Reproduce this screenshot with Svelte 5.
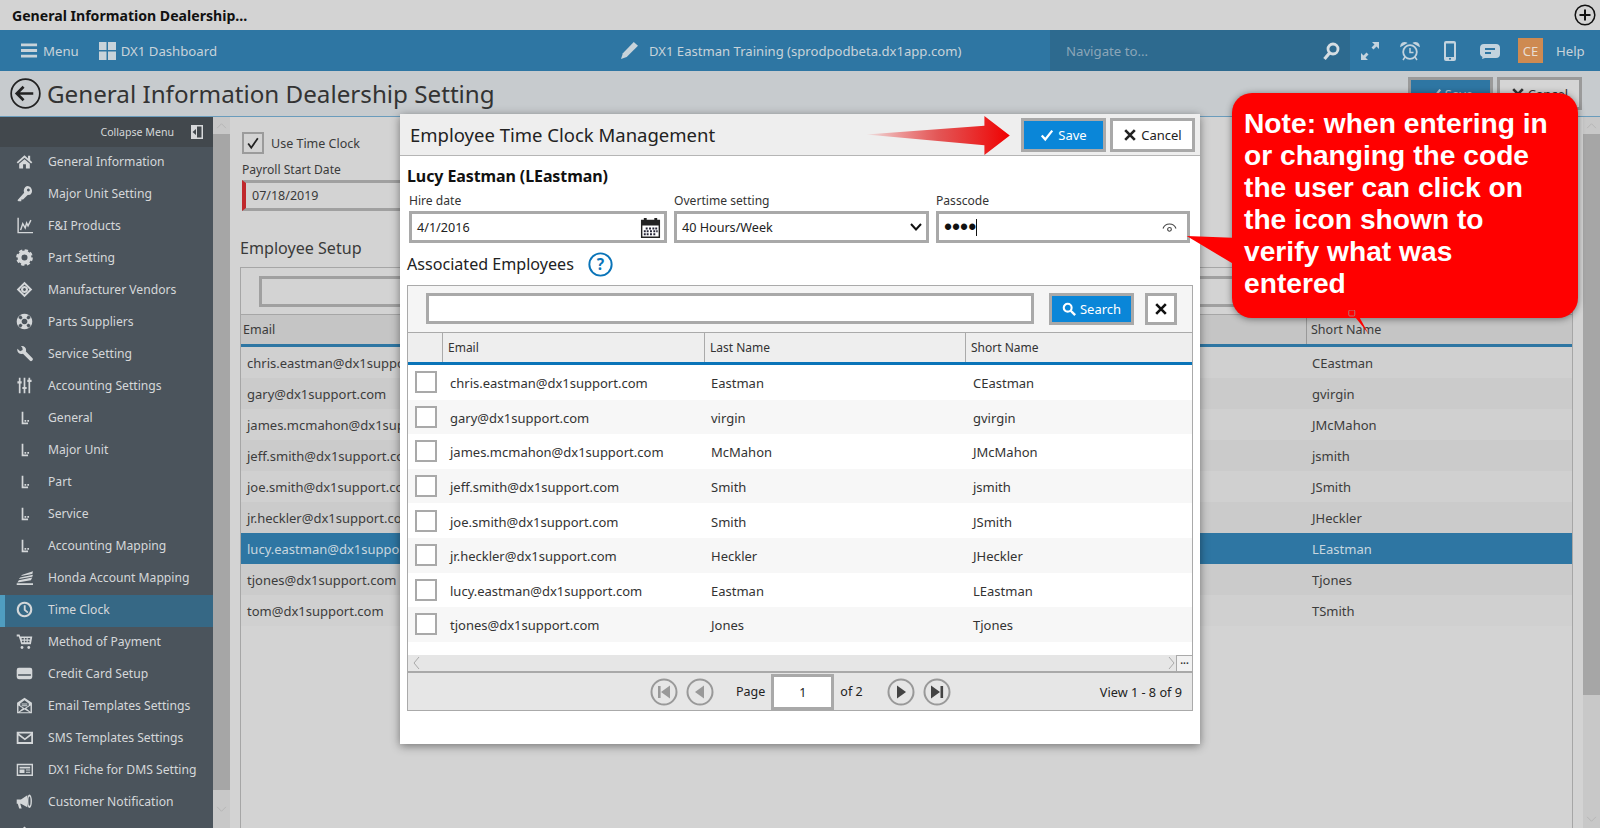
<script>
  const icons = {
    home: '<path d="M12 3 1 13l1.6 1.8L12 6.6l9.4 8.2L23 13l-3-2.6V4h-3v3.8Z"/><path d="M4.5 15.2 12 8.8l7.5 6.4V22H14v-6h-4v6H4.5Z"/>',
    key: '<path fill-rule="evenodd" d="M15.5 1.5a7 7 0 0 1 4.5 12.4L16.5 14 10 20.5H7.5V23H3.5L2 21.5l9.5-10.7a7 7 0 0 1 4-9.3Zm2 3.5a2 2 0 1 0 .01 0Z"/>',
    chart: '<path d="M2 1h2v20h20v2H2Z"/><path d="m6.5 18.5 3-9 3.5 6 2-7 2 4 4-8" fill="none" stroke="currentColor" stroke-width="2"/>',
    gear: '<circle cx="12" cy="12" r="7" fill="none" stroke="currentColor" stroke-width="5.5"/><circle cx="12" cy="12" r="10" fill="none" stroke="currentColor" stroke-width="3.6" stroke-dasharray="4.6 3.25"/>',
    vendor: '<path fill-rule="evenodd" d="M12 1 23 12 12 23 1 12Zm0 4-7 7 7 7 7-7Z"/><path fill-rule="evenodd" d="M12 7a5 5 0 1 1-.01 0Zm0 3a2 2 0 1 0 .01 0Z"/>',
    globe: '<path fill-rule="evenodd" d="M12 1a11 11 0 1 1-.01 0Zm0 7a4 4 0 1 0 .01 0ZM7.5 3.8a3 3 0 0 0-3.7 3.7l3.2 1.8a6 6 0 0 1 2.3-2.3Zm9 0-1.8 3.2A6 6 0 0 1 17 9.3l3.2-1.8a3 3 0 0 0-3.7-3.7ZM7 14.7l-3.2 1.8a3 3 0 0 0 3.7 3.7L9.3 17A6 6 0 0 1 7 14.7Zm10 0A6 6 0 0 1 14.7 17l1.8 3.2a3 3 0 0 0 3.7-3.7Z"/>',
    wrench: '<path d="M7 1.5a6 6 0 0 1 7 7.5l9 9.5a2.4 2.4 0 0 1-3.6 3.4l-9.6-9.5A6 6 0 0 1 2 5.2l3.8 3.6L9.4 7 9 4Z"/>',
    sliders: '<path d="M4 1h2.4v5H8v3H6.4v14H4V9H2V6h2Zm6.8 0h2.4v13H15v3h-1.8v6h-2.4v-6H9v-3h1.8Zm6.8 0H20v3h2v3h-2v16h-2.4V7H16V4h1.6Z"/>',
    sub: '<path d="M8 4h2.4v15H8Zm0 15h9v2.4H8ZM12 15.5h2.4v2.4H12Zm4 0h2.4v2.4H16Z"/>',
    honda: '<path d="M24 3 9 8 7 10l16-3ZM24 8 6 12l-2 2 19-3ZM23 12 4 16l-2 3 19-3ZM1 20h23v2.5H1Z"/>',
    clock: '<path fill-rule="evenodd" d="M12 1a11 11 0 1 1-.01 0Zm0 3a8 8 0 1 0 .01 0Z"/><path d="M11 6h2.6v6l4 3.4-1.6 1.8-5-4.2Z"/>',
    cart: '<path fill-rule="evenodd" d="M1 2h4l1 3h17l-2 11H7.5L4 5H1Zm7 5v2h3V7Zm4.5 0v2H15V7Zm4 0v2H20V7ZM8.5 11v2H11v-2Zm4 0v2H15v-2Zm4 0v2H19v-2Z"/><circle cx="8.5" cy="20.5" r="2"/><circle cx="18" cy="20.5" r="2"/>',
    card: '<path fill-rule="evenodd" d="M4 4h16a3 3 0 0 1 3 3v10a3 3 0 0 1-3 3H4a3 3 0 0 1-3-3V7a3 3 0 0 1 3-3Zm-1 9v2h18v-2Z"/>',
    mailopen: '<path fill-rule="evenodd" d="M12 1 22.500 8v15H1.500V8Zm0 3.500L6 9v3l6 4 6-4V9ZM3.500 12v9l6-5Zm17 0-6 4 6 5ZM12 17.500 5 21.500h14Z"/><path d="M8 9h8v1.500H8Zm0 2.500h8V13H8Z"/>',
    mail: '<path fill-rule="evenodd" d="M1 4h23v17H1Zm3 2.500 8.500 6.500L21 6.500Zm-.500 2.500v9.500h18V9l-9 7Z"/>',
    news: '<path fill-rule="evenodd" d="M1 4h23v17H1Zm2 2v13h19V6Z"/><path d="M5 8h15v2.500H5ZM5 12h7v5H5Zm9 0h6v1.500h-6Zm0 3h6v1.500h-6Z"/>',
    horn: '<path d="M1 9h6l9-6v17l-9-5H6l2 7H4.500L2.500 15H1Z"/><path fill-rule="evenodd" d="M19 2a3.500 9.500 0 0 1 0 19 3.500 9.500 0 0 1 0-19Zm0 3a1.500 6.500 0 0 0 0 13 1.500 6.500 0 0 0 0-13Z"/>',
    up: '<path d="M12 2 5 9l1.500 1.500L12 5l5.500 5.500L19 9Z"/><path d="M10 9h4v13h-4Z"/>'
  };

  const menu = [
    ['General Information', 'home'], ['Major Unit Setting', 'key'], ['F&I Products', 'chart'],
    ['Part Setting', 'gear'], ['Manufacturer Vendors', 'vendor'], ['Parts Suppliers', 'globe'],
    ['Service Setting', 'wrench'], ['Accounting Settings', 'sliders'], ['General', 'sub'],
    ['Major Unit', 'sub'], ['Part', 'sub'], ['Service', 'sub'], ['Accounting Mapping', 'sub'],
    ['Honda Account Mapping', 'honda'], ['Time Clock', 'clock'], ['Method of Payment', 'cart'],
    ['Credit Card Setup', 'card'], ['Email Templates Settings', 'mailopen'], ['SMS Templates Settings', 'mail'],
    ['DX1 Fiche for DMS Setting', 'news'], ['Customer Notification', 'horn'], ['', 'up']
  ];

  const bgRows = [
    ['chris.eastman@dx1support.com', 'CEastman'], ['gary@dx1support.com', 'gvirgin'],
    ['james.mcmahon@dx1support.com', 'JMcMahon'], ['jeff.smith@dx1support.com', 'jsmith'],
    ['joe.smith@dx1support.com', 'JSmith'], ['jr.heckler@dx1support.com', 'JHeckler'],
    ['lucy.eastman@dx1support.com', 'LEastman'], ['tjones@dx1support.com', 'Tjones'],
    ['tom@dx1support.com', 'TSmith']
  ];

  const modalRows = [
    ['chris.eastman@dx1support.com', 'Eastman', 'CEastman'], ['gary@dx1support.com', 'virgin', 'gvirgin'],
    ['james.mcmahon@dx1support.com', 'McMahon', 'JMcMahon'], ['jeff.smith@dx1support.com', 'Smith', 'jsmith'],
    ['joe.smith@dx1support.com', 'Smith', 'JSmith'], ['jr.heckler@dx1support.com', 'Heckler', 'JHeckler'],
    ['lucy.eastman@dx1support.com', 'Eastman', 'LEastman'], ['tjones@dx1support.com', 'Jones', 'Tjones']
  ];
</script>

{#snippet check()}
  <svg class="btn-ic" viewBox="0 0 16 16"><path d="M2 8.500 6 13l8-10" fill="none" stroke="currentColor" stroke-width="2.600"/></svg>
{/snippet}
{#snippet cross(c)}
  <svg class={c} viewBox="0 0 16 16"><path d="M2.500 2.500 13.500 13.500M13.500 2.500 2.500 13.500" fill="none" stroke="currentColor" stroke-width="3"/></svg>
{/snippet}
{#snippet pagerBtn(kind)}
  <svg class="pg" viewBox="0 0 28 28">
    <circle cx="14" cy="14" r="12.500" fill="none" stroke="#999" stroke-width="2"/>
    {#if kind === 'first'}<path d="M8 8h2.600v12H8ZM20 7.500v13l-9-6.500Z" fill="#999"/>{/if}
    {#if kind === 'prev'}<path d="M18 7.500v13l-9-6.500Z" fill="#999"/>{/if}
    {#if kind === 'next'}<path d="M10 7.500v13l9-6.500Z" fill="#444"/>{/if}
    {#if kind === 'last'}<path d="M8 7.500v13l9-6.500ZM17.500 8h2.600v12h-2.600Z" fill="#444"/>{/if}
  </svg>
{/snippet}

<div class="page">
  <header class="topbar">
    <span class="app-title">General Information Dealership...</span>
    <svg class="plus" viewBox="0 0 22 22"><circle cx="11" cy="11" r="9.800" fill="none" stroke="#111" stroke-width="1.500"/><path d="M11 5.500v11M5.500 11h11" stroke="#111" stroke-width="2"/></svg>
  </header>

  <nav class="navbar">
    <div class="nav-left">
      <span class="nav-item">
        <svg class="burger" viewBox="0 0 18 15"><path d="M0 0h17v3H0Zm0 6h17v3H0Zm0 6h17v3H0Z" fill="currentColor"/></svg>Menu
      </span>
      <span class="nav-item">
        <svg class="tiles" viewBox="0 0 17 18"><path d="M0 0h7.500v8H0Zm9 0h8v8H9ZM0 9.500h7.500V18H0Zm9 0h8V18H9Z" fill="currentColor"/></svg>DX1 Dashboard
      </span>
    </div>
    <div class="nav-center">
      <svg class="pencil" viewBox="0 0 18 18"><path d="M13.500 0 18 4 6 16l-6 2 2-6Z" fill="currentColor"/></svg>
      DX1 Eastman Training (sprodpodbeta.dx1app.com)
    </div>
    <div class="nav-search">
      <span>Navigate to...</span>
      <svg class="search-ic" viewBox="0 0 18 18"><circle cx="11" cy="7" r="5" fill="none" stroke="currentColor" stroke-width="2.800"/><path d="m7.500 11-5 6" stroke="currentColor" stroke-width="3.200"/></svg>
    </div>
    <div class="nav-icons">
      <svg class="n-ic" viewBox="0 0 20 20"><path d="M12 1h7v7l-2.500-2.500-3 3-2-2 3-3ZM1 12v7h7l-2.500-2.500 3-3-2-2-3 3Z" fill="currentColor"/></svg>
      <svg class="n-ic" viewBox="0 0 20 20"><circle cx="10" cy="11" r="6.800" fill="none" stroke="currentColor" stroke-width="1.800"/><path d="M10 7v4.500h3.500" fill="none" stroke="currentColor" stroke-width="1.500"/><path d="M1 5a3.500 3.500 0 0 1 5-3ZM19 5a3.500 3.500 0 0 0-5-3ZM5 16l-2 3M15 16l2 3" fill="currentColor" stroke="currentColor" stroke-width="1.500"/></svg>
      <svg class="n-ic" viewBox="0 0 20 20"><path fill-rule="evenodd" d="M6 0h8a2 2 0 0 1 2 2v16a2 2 0 0 1-2 2H6a2 2 0 0 1-2-2V2a2 2 0 0 1 2-2Zm0 2.500V16h8V2.500ZM10 16.800a1 1 0 1 0 .01 0Z" fill="currentColor"/></svg>
      <svg class="n-ic" viewBox="0 0 20 20"><path fill-rule="evenodd" d="M4 3h12a4 4 0 0 1 4 4v6a4 4 0 0 1-4 4H5l-3 1 .5-2A4 4 0 0 1 0 13V7a4 4 0 0 1 4-4Zm1 4v2h10V7Zm0 4v2h6v-2Z" fill="currentColor"/></svg>
      <span class="avatar">CE</span>
      <span class="help">Help</span>
    </div>
  </nav>

  <div class="titlebar">
    <svg class="back" viewBox="0 0 32 32"><circle cx="16" cy="16" r="14.800" fill="none" stroke="#222" stroke-width="1.800"/><path d="M7 16h17M14 9l-7 7 7 7" fill="none" stroke="#222" stroke-width="2.800"/></svg>
    <h1>General Information Dealership Setting</h1>
    <div class="title-actions">
      <span class="tb-btn save">{@render check()} Save</span>
      <span class="tb-btn cancel">{@render cross('btn-ic')} Cancel</span>
    </div>
  </div>

  <div class="main">
    <aside class="sidebar">
      <div class="collapse">
        Collapse Menu
        <svg class="col-ic" viewBox="0 0 12 14"><path fill-rule="evenodd" d="M0 0h12v14H0Zm6 1.500v11h4.500v-11ZM1.500 7 5 4v6Z" fill="currentColor"/></svg>
      </div>
      {#each menu as [label, ic]}
        <div class="menu-row" class:active={label === 'Time Clock'}>
          <svg class="m-ic" viewBox="0 0 24 24" fill="currentColor">{@html icons[ic]}</svg>
          <span>{label}</span>
        </div>
      {/each}
    </aside>
    <div class="vscroll">
      <div class="arrow"><svg viewBox="0 0 12 8"><path d="m1 7 5-5 5 5" fill="none" stroke="#b4b4b4"/></svg></div>
      <div class="thumb side-thumb"></div>
      <div class="arrow"><svg viewBox="0 0 12 8"><path d="m1 1 5 5 5-5" fill="none" stroke="#b4b4b4"/></svg></div>
    </div>

    <section class="content">
      <div class="use-clock">
        <span class="bg-check"><svg viewBox="0 0 16 16"><path d="M2.500 8.500 6 13.500l7.500-11" fill="none" stroke="#222" stroke-width="2"/></svg></span>
        Use Time Clock
      </div>
      <div class="field-label">Payroll Start Date</div>
      <div class="bg-input">07/18/2019</div>
      <h2>Employee Setup</h2>
      <div class="bg-panel">
        <div class="bg-tool"><div class="bg-search"></div></div>
        <div class="bg-head"><span class="c1">Email</span><span class="c2">Short Name</span></div>
        {#each bgRows as [mail, short], i}
          <div class="bg-row" class:alt={i % 2 === 1} class:sel={short === 'LEastman'}>
            <span class="c1">{mail}</span><span class="c2">{short}</span>
          </div>
        {/each}
      </div>
    </section>

    <div class="vscroll page-scroll">
      <div class="arrow"><svg viewBox="0 0 12 8"><path d="m1 7 5-5 5 5" fill="none" stroke="#b4b4b4"/></svg></div>
      <div class="thumb page-thumb"></div>
      <div class="rest"></div>
      <div class="arrow"><svg viewBox="0 0 12 8"><path d="m1 1 5 5 5-5" fill="none" stroke="#b4b4b4"/></svg></div>
    </div>
  </div>

  <div class="modal">
    <div class="m-head">
      <span class="m-title">Employee Time Clock Management</span>
      <div class="m-actions">
        <button class="btn primary">{@render check()} Save</button>
        <button class="btn plain">{@render cross('btn-ic')} Cancel</button>
      </div>
    </div>
    <div class="m-body">
      <div class="person">Lucy Eastman (LEastman)</div>
      <div class="fields">
        <label class="fld"><span>Hire date</span>
          <div class="box">4/1/2016
            <svg class="cal" viewBox="0 0 22 22"><path fill-rule="evenodd" d="M1 3h3V1h3v2h8V1h3v2h3v19H1Zm1.500 6v11.500h17V9Z" fill="#222"/><path d="M6 11h2v2H6Zm3.500 0h2v2h-2Zm3.500 0h2v2h-2Zm3 0h2v2h-2ZM4 14h2v2H4Zm3 0h2v2H7Zm3.500 0h2v2h-2Zm3.500 0h2v2h-2Zm3 0h1.500v2H17ZM4 17h2v2H4Zm3 0h2v2H7Zm3.500 0h2v2h-2Zm3.500 0h2v2h-2Z" fill="#223"/></svg>
          </div>
        </label>
        <label class="fld"><span>Overtime setting</span>
          <div class="box">40 Hours/Week
            <svg class="chev" viewBox="0 0 12 8"><path d="m1 1 5 5.500L11 1" fill="none" stroke="#111" stroke-width="2"/></svg>
          </div>
        </label>
        <label class="fld"><span>Passcode</span>
          <div class="box pass"><span class="dots">••••</span><i class="caret"></i>
            <svg class="eye" viewBox="0 0 16 14"><path d="M1 8a7.500 7.500 0 0 1 14 0" fill="none" stroke="#444" stroke-width="1.200"/><circle cx="8" cy="9" r="2" fill="none" stroke="#444" stroke-width="1.200"/></svg>
          </div>
        </label>
      </div>
      <div class="assoc">
        <span>Associated Employees</span>
        <svg class="help-ic" viewBox="0 0 26 26"><circle cx="13" cy="13" r="11.600" fill="none" stroke="#0a74b8" stroke-width="2"/><text x="13" y="18.500" text-anchor="middle" class="qm">?</text></svg>
      </div>
      <div class="grid">
        <div class="g-tool">
          <div class="g-input"></div>
          <button class="btn primary search"><svg class="btn-ic" viewBox="0 0 16 16"><circle cx="6.500" cy="6.500" r="4.500" fill="none" stroke="currentColor" stroke-width="2.400"/><path d="m10 10 5 5" stroke="currentColor" stroke-width="2.800"/></svg> Search</button>
          <button class="btn plain clear">{@render cross('x-ic')}</button>
        </div>
        <div class="g-head">
          <span class="g-c0"></span><span class="g-c1">Email</span><span class="g-c1 second">Last Name</span><span class="g-c2">Short Name</span>
        </div>
        <div class="g-rows">
          {#each modalRows as [mail, last, short], i}
            <div class="g-row" class:alt={i % 2 === 1}>
              <span class="g-cell0"><i class="cb"></i></span>
              <span class="g-cell first">{mail}</span><span class="g-cell">{last}</span><span class="g-cell final">{short}</span>
            </div>
          {/each}
        </div>
        <div class="hscroll">
          <svg class="hs-a" viewBox="0 0 7 14"><path d="M6 1 1 7l5 6" fill="none" stroke="#aaa"/></svg>
          <span class="fill"></span>
          <svg class="hs-a" viewBox="0 0 7 14"><path d="m1 1 5 6-5 6" fill="none" stroke="#aaa"/></svg>
          <span class="more">...</span>
        </div>
        <div class="pager">
          <div class="pg-mid">
            <span class="pg-group">{@render pagerBtn('first')}{@render pagerBtn('prev')}</span>
            <span class="pg-text left">Page</span>
            <span class="pg-num">1</span>
            <span class="pg-text right">of 2</span>
            <span class="pg-group next">{@render pagerBtn('next')}{@render pagerBtn('last')}</span>
          </div>
          <span class="view">View 1 - 8 of 9</span>
        </div>
      </div>
    </div>
  </div>

  <svg class="red-arrow" viewBox="0 0 150 42">
    <defs>
      <linearGradient id="ag" x1="0" x2="1" y1="0" y2="0">
        <stop offset="0" stop-color="#ee0000" stop-opacity="0.050"/>
        <stop offset="0.500" stop-color="#e03030" stop-opacity="0.800"/>
        <stop offset="1" stop-color="#f00000"/>
      </linearGradient>
    </defs>
    <path d="M0 20 121 11V1L147 21 121 41V31Z" fill="url(#ag)"/>
  </svg>

  <div class="note">
    <svg class="tail-a" viewBox="0 0 50 34"><path d="M50 2 0 0 50 30Z" fill="#f00"/></svg>
    <svg class="tail-b" viewBox="0 0 28 40"><path d="M2 0 26 30 28 33 10 0Z" fill="#f00"/><rect x="1" y="0" width="8" height="8" rx="1.500" fill="#f00" stroke="#999"/></svg>
    <p>Note: when entering in<br>or changing the code<br>the user can click on<br>the icon shown to<br>verify what was<br>entered</p>
  </div>
</div>

<style>
  :global(body) { margin: 0; background: #d3d3d3; }
  .page {
    position: relative;
    width: 1600px;
    height: 828px;
    overflow: hidden;
    display: flex;
    flex-direction: column;
    font-family: "Noto Sans", "Open Sans", sans-serif;
    font-size: 13px;
    color: #333;
    background: #d3d3d3;
  }
  .topbar {
    height: 30px;
    flex: none;
    display: flex;
    align-items: center;
    justify-content: space-between;
    padding: 0 4px 0 12px;
    background: #d3d3d3;
    box-sizing: border-box;
  }
  .app-title { font-weight: 700; font-size: 14.100px; color: #111; }
  .plus { width: 22px; height: 22px; }

  .navbar {
    height: 41px;
    flex: none;
    display: flex;
    align-items: stretch;
    background: #2e76a3;
    color: #c8d3da;
    font-size: 13.200px;
  }
  .nav-left { display: flex; align-items: center; gap: 20px; padding-left: 21px; width: 604px; box-sizing: border-box; }
  .nav-item { display: flex; align-items: center; gap: 5px; }
  .burger { width: 17px; height: 15px; }
  .tiles { width: 17px; height: 18px; }
  .nav-center { width: 446px; display: flex; align-items: center; gap: 11px; padding-left: 17px; box-sizing: border-box; font-size: 13.100px; }
  .pencil { width: 17px; height: 17px; }
  .nav-search {
    width: 300px;
    background: #2d6a8f;
    display: flex;
    align-items: center;
    justify-content: space-between;
    padding: 0 10px 0 16px;
    box-sizing: border-box;
    color: #8ba6b8;
  }
  .search-ic { width: 18px; height: 18px; color: #d5dde2; }
  .nav-icons { flex: 1; display: flex; align-items: center; padding-left: 10px; }
  .n-ic { width: 20px; height: 20px; margin-right: 20px; color: #c3d3de; }
  .avatar {
    width: 25px; height: 25px; margin-left: -2px;
    background: #ce8a51; color: #e8dcd2;
    display: flex; align-items: center; justify-content: center;
    font-size: 13px;
  }
  .help { margin-left: 13px; }

  .titlebar {
    height: 46px;
    flex: none;
    display: flex;
    align-items: center;
    box-sizing: border-box;
    padding-left: 10px;
    background: #c7cbce;
    border-bottom: 1px solid #6a9cbc;
  }
  .back { width: 31px; height: 31px; margin-right: 6px; }
  h1 { margin: 0; font-weight: 400; font-size: 24.200px; color: #333; white-space: nowrap; }
  .title-actions { margin-left: auto; margin-right: 18px; display: flex; gap: 4px; align-self: flex-start; margin-top: 6px; }
  .tb-btn {
    width: 85px; height: 33px;
    box-sizing: border-box;
    border: 3px solid #9a9a9a;
    display: flex; align-items: center; justify-content: center; gap: 3px;
  }
  .tb-btn.save { background: #2e76a3; color: #b9c9d3; }
  .tb-btn.cancel { background: #d5d5d5; color: #333; }

  .main { flex: 1; display: flex; min-height: 0; }
  .sidebar { width: 213px; flex: none; background: #4b545c; color: #d6d8da; overflow: hidden; }
  .collapse {
    height: 30px;
    background: #42484d;
    display: flex; align-items: center; justify-content: flex-end;
    padding-right: 10px; gap: 17px;
    font-size: 10.600px;
    color: #d6d8da;
  }
  .col-ic { width: 12px; height: 14px; }
  .menu-row {
    height: 32px;
    display: flex;
    align-items: center;
    padding: 0 0 3px 16px;
    gap: 15px;
    box-sizing: border-box;
    font-size: 12.150px;
    white-space: nowrap;
  }
  .menu-row.active { background: #366885; border-left: 5px solid #4f9dc0; padding-left: 11px; }
  .m-ic { width: 17px; height: 17px; flex: none; color: #d4d7d9; }

  .vscroll { width: 17px; flex: none; background: #c8c8c8; display: flex; flex-direction: column; }
  .arrow { height: 17px; display: flex; align-items: center; justify-content: center; flex: none; }
  .arrow svg { width: 11px; height: 7px; }
  .thumb { background: #a6a6a6; }
  .side-thumb { flex: 1; }
  .vscroll > .arrow:last-child { height: 38px; background: #c8c8c8; }
  .page-scroll { background: #c8c8c8; }
  .page-scroll > .arrow:last-child { height: 17px; margin-top: 4px; }
  .page-thumb { height: 561px; }
  .rest { flex: 1; }

  .content { flex: 1; min-width: 0; padding: 15px 0 0 10px; box-sizing: border-box; position: relative; color: #3a3a3a; }
  .use-clock { display: flex; align-items: center; gap: 7px; height: 22px; margin-left: 2px; font-size: 12.500px; }
  .bg-check { width: 22px; height: 22px; box-sizing: border-box; border: 2px solid #9b9b9b; display: flex; align-items: center; justify-content: center; }
  .bg-check svg { width: 14px; height: 14px; }
  .field-label { margin: 7px 0 0 2px; font-size: 12.100px; line-height: 17px; height: 19px; }
  .bg-input {
    margin: 0 0 0 2px;
    height: 31px; width: 200px;
    box-sizing: border-box;
    border: 3px solid #a0a0a0;
    border-left: 4px solid #c0282c;
    padding-left: 6px;
    display: flex; align-items: center;
    font-size: 12.500px;
  }
  h2 { margin: 24px 0 0 0; font-weight: 400; font-size: 16.100px; line-height: 26px; color: #3a3a3a; height: 26px; }
  .bg-panel {
    margin-top: 6px;
    width: 1333px;
    height: 600px;
    box-sizing: border-box;
    border: 1px solid #a6a6a6;
    border-bottom: 0;
  }
  .bg-tool { height: 46px; box-sizing: border-box; padding-top: 8px; padding-left: 18px; }
  .bg-search { height: 31px; width: 1200px; box-sizing: border-box; border: 3px solid #a0a0a0; }
  .bg-head { height: 33px; border-top: 1px solid #a6a6a6; border-bottom: 3px solid #2e76a3; background: #c5c5c5; box-sizing: border-box; display: flex; align-items: center; font-size: 12.500px; }
  .bg-head .c1, .bg-head .c2 { padding-left: 2px; }
  .bg-row { height: 31px; display: flex; align-items: center; background: #d0d0d0; color: #3c3c3c; font-size: 13px; }
  .bg-row.alt { background: #cbcbcb; }
  .bg-row.sel { background: #2e76a3; color: #c8d6df; }
  .c1 { width: 1065px; padding-left: 6px; box-sizing: border-box; }
  .c2 { padding-left: 6px; height: 100%; display: flex; align-items: center; }
  .bg-head .c2 { border-left: 1px solid #999; padding-left: 4px; }

  .modal {
    position: absolute;
    left: 400px; top: 114px;
    width: 800px; height: 630px;
    background: #fff;
    box-shadow: 0 2px 9px rgba(0, 0, 0, .45);
    color: #222;
  }
  .m-head {
    height: 42px;
    background: #eee;
    border-bottom: 1px solid #b5b5b5;
    box-sizing: border-box;
    display: flex;
    align-items: center;
    justify-content: space-between;
    padding: 0 5px 0 10px;
    position: relative;
  }
  .m-title { font-size: 18.500px; color: #222; }
  .m-actions { display: flex; gap: 4px; }
  .btn {
    height: 34px;
    box-sizing: border-box;
    font: inherit;
    font-size: 13px;
    display: inline-flex; align-items: center; justify-content: center; gap: 4px;
    border: 3px solid #a9a9a9;
    padding: 0;
    background: #fff;
    color: #222;
  }
  .btn.primary { background: #0a86d8; color: #fff; width: 85px; }
  .btn.plain { width: 85px; }
  .btn-ic { width: 14px; height: 14px; flex: none; }
  .m-body { padding: 0 7px; }
  .person { font-weight: 700; font-size: 16px; margin-top: 10px; height: 25px; line-height: 20px; color: #111; letter-spacing: -.1px; }
  .fields { display: flex; gap: 7px; padding: 0 3px 0 2px; }
  .fld { display: flex; flex-direction: column; font-size: 12.100px; flex: none; }
  .fld:nth-child(1) { width: 258px; }
  .fld:nth-child(2) { width: 255px; }
  .fld:nth-child(3) { width: 254px; }
  .fld > span { height: 20px; line-height: 19px; color: #333; }
  .box {
    height: 32px;
    box-sizing: border-box;
    border: 3px solid #a9a9a9;
    display: flex; align-items: center; justify-content: space-between;
    padding: 0 5px;
    font-size: 12.600px;
    color: #222;
  }
  .cal { width: 21px; height: 21px; margin-right: -2px; }
  .chev { width: 12px; height: 8px; margin-right: -1px; }
  .pass { justify-content: flex-start; }
  .dots { font-size: 23px; line-height: 1; color: #111; font-family: "Liberation Sans", sans-serif; }
  .caret { width: 1px; height: 17px; background: #111; }
  .eye { width: 15px; height: 13px; margin-left: auto; margin-right: 5px; }
  .assoc { display: flex; align-items: center; gap: 14px; height: 42px; font-size: 16.100px; color: #222; }
  .help-ic { width: 25px; height: 25px; }
  .qm { font: 700 16px "Noto Sans", sans-serif; fill: #0a74b8; }

  .grid { border: 1px solid #aaa; height: 426px; box-sizing: border-box; margin: 0; width: 786px; display: flex; flex-direction: column; }
  .g-tool { height: 46px; flex: none; background: #f5f5f5; display: flex; align-items: flex-start; padding: 7px 0 0 18px; box-sizing: border-box; }
  .g-input { width: 608px; height: 31px; box-sizing: border-box; border: 3px solid #a9a9a9; background: #fff; }
  .btn.search { margin-left: 15px; width: 85px; height: 32px; }
  .btn.clear { margin-left: 11px; width: 32px; height: 32px; }
  .x-ic { width: 14px; height: 14px; color: #111; }
  .g-head { height: 33px; flex: none; display: flex; background: #eee; border-top: 1px solid #aaa; border-bottom: 3px solid #0a74b8; box-sizing: border-box; font-size: 12px; color: #333; }
  .g-head span { display: flex; align-items: center; padding-left: 5px; box-sizing: border-box; }
  .g-c0 { width: 35px; border-right: 1px solid #aaa; }
  .g-c1 { width: 262px; border-right: 1px solid #aaa; }
  .g-c1.second { width: 261px; }
  .g-c2 { flex: 1; }
  .g-rows { height: 290px; flex: none; }
  .g-row { height: 34.600px; display: flex; align-items: center; background: #fff; font-size: 13px; color: #333; }
  .g-row.alt { background: #f7f7f7; }
  .g-cell0 { width: 35px; flex: none; display: flex; padding-left: 7px; box-sizing: border-box; }
  .cb { width: 22px; height: 22px; box-sizing: border-box; border: 2px solid #a9a9a9; background: #fff; }
  .g-cell { flex: none; width: 262px; padding: 2px 0 0 7px; box-sizing: border-box; }
  .g-cell.first { width: 261px; }
  .g-cell.final { width: 220px; }
  .hscroll { height: 16px; flex: none; background: #e6e6e6; display: flex; align-items: center; padding: 0 0 0 5px; position: relative; }
  .hs-a { width: 7px; height: 14px; flex: none; }
  .fill { flex: 1; }
  .more { width: 16px; margin-left: 1px; height: 16px; background: #f2f2f2; border-left: 1px solid #aaa; border-top: 1px solid #aaa; box-sizing: border-box; font-size: 10px; line-height: 9px; text-align: center; color: #333; font-weight: 700; }
  .pager {
    flex: 1;
    background: #e6e6e6;
    border-top: 2px solid #a9a9a9;
    display: flex; align-items: center;
    position: relative;
    box-sizing: border-box;
    font-size: 12.500px;
    color: #222;
  }
  .pg-mid { display: flex; align-items: center; margin-left: 242px; }
  .pg-group { display: flex; gap: 8px; }
  .pg-group.next { margin-left: 24px; }
  :global(.pg) { width: 28px; height: 28px; display: block; }
  .pg-text.left { margin-left: 22px; margin-right: 6px; }
  .pg-text.right { margin-left: 6px; }
  .pg-num { width: 63px; height: 36px; margin-top: 1px; background: #fff; border: 3px solid #a9a9a9; box-sizing: border-box; display: flex; align-items: center; justify-content: center; }
  .view { margin-left: auto; margin-right: 10px; font-size: 12.700px; }

  .red-arrow { position: absolute; left: 865px; top: 115px; width: 149px; height: 41px; }
  .note {
    position: absolute;
    left: 1232px; top: 93px;
    width: 346px; height: 225px;
    background: #f00;
    border-radius: 20px;
    box-shadow: 0 1px 7px rgba(0, 0, 0, .45);
    color: #fff;
  }
  .note p {
    margin: 0;
    padding: 14px 0 0 12px;
    font-family: "Liberation Sans", Arial, sans-serif;
    font-weight: 700;
    font-size: 28.200px;
    line-height: 32.100px;
  }
  .tail-a { position: absolute; left: -46px; top: 143px; width: 47px; height: 31px; }
  .tail-b { position: absolute; left: 113px; top: 217px; width: 27px; height: 30px; }
</style>
